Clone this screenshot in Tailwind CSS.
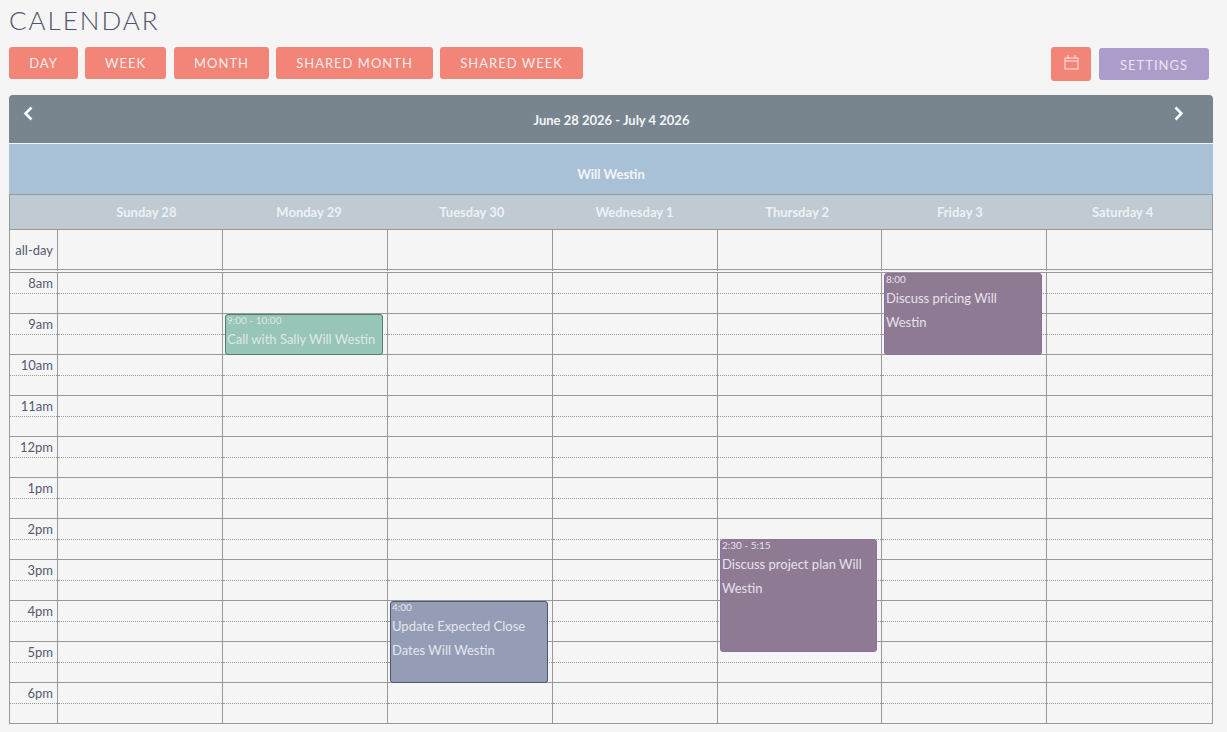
<!DOCTYPE html>
<html lang="en">
<head>
  <meta charset="UTF-8" />
  <title>Calendar</title>
  <script src="https://cdn.jsdelivr.net/npm/@tailwindcss/browser@4"></script>
</head>
<body class="bg-[#f5f5f5] font-['Lato','Open_Sans',sans-serif] text-[#555a70] overflow-hidden">

<div class="pl-[9px] w-[1213px]">
  <h1 class="h-[47px] pt-[4px] text-[26px] leading-[33px] font-light tracking-[2px] text-[#50536b]">CALENDAR</h1>

  <!-- Toolbar -->
  <div class="flex items-start h-[48px] text-[13px] tracking-[1px] text-[#fdeeea]">
    <button class="w-[69px] h-[32px] pt-[1px] bg-[#f28478] rounded-[3px]">DAY</button>
    <button class="w-[81px] h-[32px] pt-[1px] ml-[7px] bg-[#f28478] rounded-[3px]">WEEK</button>
    <button class="w-[95px] h-[32px] pt-[1px] ml-[8px] bg-[#f28478] rounded-[3px]">MONTH</button>
    <button class="w-[157px] h-[32px] pt-[1px] ml-[7px] bg-[#f28478] rounded-[3px]">SHARED MONTH</button>
    <button class="w-[143px] h-[32px] pt-[1px] ml-[7px] bg-[#f28478] rounded-[3px]">SHARED WEEK</button>
    <button class="w-[40px] h-[34px] ml-auto bg-[#f28478] rounded-[3px] flex items-center justify-center">
      <svg class="mb-[3px]" width="15" height="15" viewBox="0 0 15 15" fill="none" stroke="#ffe8e3" stroke-width="1"><rect x="1" y="3" width="13" height="11" /><path d="M1 6h13M4 0v4M11 0v4" /></svg>
    </button>
    <button class="w-[110px] h-[32px] pt-[3px] mt-[1px] ml-[8px] mr-[4px] bg-[#ac9cca] rounded-[3px] text-[#e9e4f3]">SETTINGS</button>
  </div>

  <!-- Calendar header -->
  <div class="h-[48px] bg-[#78858f] rounded-t-[4px] flex items-start">
    <svg class="mt-[11px] ml-[13px]" width="12" height="15" viewBox="0 0 12 15" fill="none" stroke="#fff" stroke-width="2.6"><path d="M9.5 1.5 3.5 7.5l6 6" /></svg>
    <div class="flex-1 pl-[16px] text-center pt-[16px] text-[13px] leading-[18px] font-bold text-[#f3f5f6]">June 28 2026 - July 4 2026</div>
    <svg class="mt-[11px] mr-[28px]" width="12" height="15" viewBox="0 0 12 15" fill="none" stroke="#fff" stroke-width="2.6"><path d="M2.5 1.5 8.5 7.5l-6 6" /></svg>
  </div>
  <div class="h-[50px] mt-[1px] bg-[#a9c1d6] flex items-center justify-center text-[13px] font-bold text-[#f3f5f6] pt-[12px]">Will Westin</div>

  <div class="border border-b-0 border-[#999]">
    <!-- Day names -->
    <div class="h-[34px] pt-[2px] bg-[#bfcad3] grid grid-cols-7 pl-[55px] pr-[8px] items-center text-center text-[13px] font-bold text-[#eef1f3]">
      <div>Sunday 28</div>
      <div>Monday 29</div>
      <div>Tuesday 30</div>
      <div>Wednesday 1</div>
      <div>Thursday 2</div>
      <div>Friday 3</div>
      <div>Saturday 4</div>
    </div>

    <!-- All-day row -->
    <div class="h-[41px] border-t border-b border-[#999] grid grid-cols-[47px_165px_165px_165px_165px_164px_165px_166px]">
      <div class="pr-[4px] text-right text-[13px] leading-[41px]">all-day</div>
      <div class="border-l border-[#999]"></div>
      <div class="border-l border-[#999]"></div>
      <div class="border-l border-[#999]"></div>
      <div class="border-l border-[#999]"></div>
      <div class="border-l border-[#999]"></div>
      <div class="border-l border-[#999]"></div>
      <div class="border-l border-[#999]"></div>
    </div>

    <!-- Time grid -->
    <div class="mt-[2px] border-t border-[#999] grid grid-cols-[47px_165px_165px_165px_165px_164px_165px_166px]" id="grid">
      <div id="labels"></div>
      <div class="day relative border-l border-[#999]"></div>
      <div class="day relative border-l border-[#999]">
        <div class="absolute left-[2px] top-[41px] w-[158px] h-[41px] z-10 bg-[#97c5b8] border border-[#4f7f70] rounded-[3px] px-[1px] text-[#dfe8e6] overflow-hidden">
          <div class="text-[10px] leading-[11px]">9:00 - 10:00</div>
          <div class="text-[13px] leading-[24px] pt-[1px]">Call with Sally Will Westin</div>
        </div>
      </div>
      <div class="day relative border-l border-[#999]">
        <div class="absolute left-[2px] top-[328px] w-[158px] h-[82px] z-10 bg-[#959db6] border border-[#4d5770] rounded-[3px] px-[1px] text-[#e3e6ee] overflow-hidden">
          <div class="text-[10px] leading-[11px]">4:00</div>
          <div class="text-[13px] leading-[24px] pt-[1px]">Update Expected Close Dates Will Westin</div>
        </div>
      </div>
      <div class="day relative border-l border-[#999]"></div>
      <div class="day relative border-l border-[#999]">
        <div class="absolute left-[2px] top-[266px] w-[157px] h-[113px] z-10 bg-[#8f7a94] border border-[#8a72a0] rounded-[3px] px-[1px] text-[#e6e2ea] overflow-hidden">
          <div class="text-[10px] leading-[11px]">2:30 - 5:15</div>
          <div class="text-[13px] leading-[24px] pt-[1px]">Discuss project plan Will Westin</div>
        </div>
      </div>
      <div class="day relative border-l border-[#999]">
        <div class="absolute left-[2px] top-0 w-[158px] h-[82px] z-10 bg-[#8f7a94] border border-[#8a72a0] rounded-[3px] px-[1px] text-[#e6e2ea] overflow-hidden">
          <div class="text-[10px] leading-[11px]">8:00</div>
          <div class="text-[13px] leading-[24px] pt-[1px]">Discuss pricing Will Westin</div>
        </div>
      </div>
      <div class="day relative border-l border-[#999]"></div>
    </div>
  </div>
</div>

<script>
  const hours = ['8am', '9am', '10am', '11am', '12pm', '1pm', '2pm', '3pm', '4pm', '5pm', '6pm'];
  const slot = '<div class="h-[21px] border-b border-dotted border-[#999]"></div><div class="h-[20px] border-b border-[#999]"></div>';

  document.querySelectorAll('.day').forEach(day => {
    day.insertAdjacentHTML('afterbegin', hours.map(() => slot).join(''));
  });

  document.getElementById('labels').innerHTML = hours.map(h => {
    return `<div class="h-[21px] border-b border-dotted border-[#999] pr-[4px] text-right text-[13px] leading-[20px]">${h}</div><div class="h-[20px] border-b border-[#999]"></div>`;
  }).join('');
</script>

</body>
</html>
